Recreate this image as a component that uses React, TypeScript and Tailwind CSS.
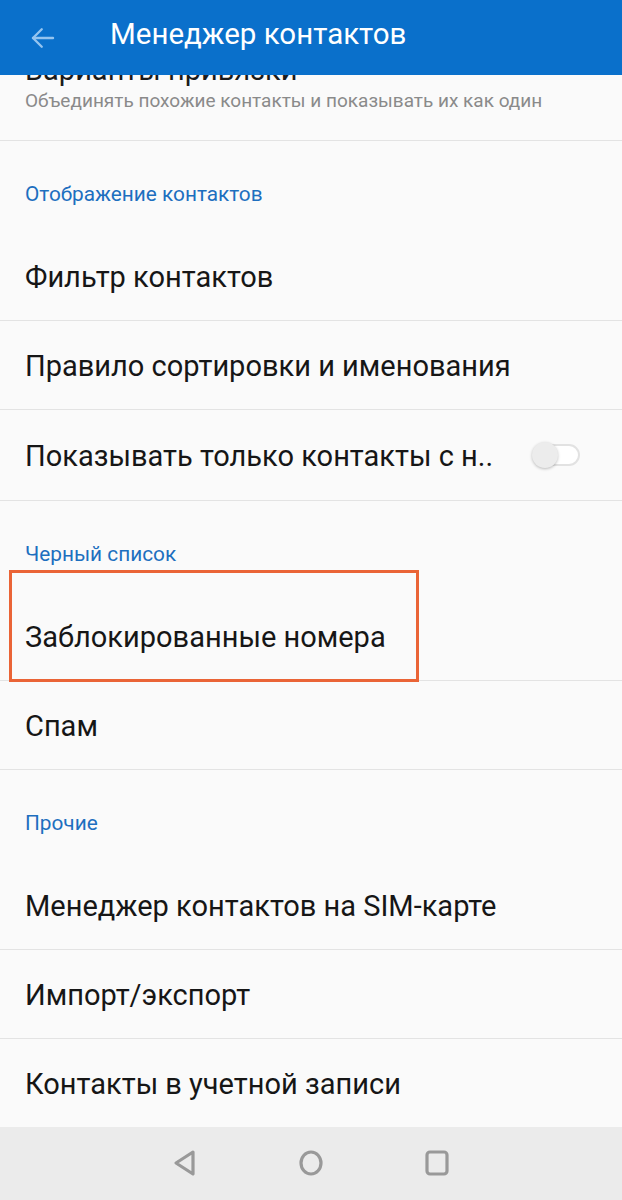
import React from "react"

const font = { fontFamily: "Roboto, 'Noto Sans', sans-serif" }

type Row = { kind: "section"; title: string } | { kind: "item"; title: string; toggle?: boolean; marked?: boolean; last?: boolean; tall?: boolean }

const rows: Row[] = [
  { kind: "section", title: "Отображение контактов" },
  { kind: "item", title: "Фильтр контактов" },
  { kind: "item", title: "Правило сортировки и именования" },
  { kind: "item", title: "Показывать только контакты с н..", toggle: true, tall: true },
  { kind: "section", title: "Черный список" },
  { kind: "item", title: "Заблокированные номера", marked: true },
  { kind: "item", title: "Спам" },
  { kind: "section", title: "Прочие" },
  { kind: "item", title: "Менеджер контактов на SIM-карте" },
  { kind: "item", title: "Импорт/экспорт" },
  { kind: "item", title: "Контакты в учетной записи", last: true },
]

const Toggle = () => (
  <div className="relative w-[48px] h-[28px] flex items-center">
    <div className="absolute left-[10px] right-0 h-[22px] rounded-full border-2 border-[#e2e2e2] bg-white" />
    <div className="absolute left-0 w-[26px] h-[26px] rounded-full bg-[#ececec] shadow-[0_1px_3px_rgba(0,0,0,0.25)]" />
  </div>
)

export default function App() {
  return (
    <div className="w-[622px] h-[1200px] bg-[#fafafa] flex flex-col overflow-hidden" style={font}>
      {/* шапка */}
      <div className="h-[75px] shrink-0 bg-[#0a70cb] flex items-center z-10">
        <div className="w-[110px] pl-[28px] flex items-center">
          <svg width="30" height="30" viewBox="0 0 24 24" fill="none" stroke="#95c4ef" strokeWidth="1.9" strokeLinecap="round" strokeLinejoin="round">
            <path d="M20 12H4" />
            <path d="M11 19l-7-7 7-7" />
          </svg>
        </div>
        <span className="text-white text-[29.5px] leading-none mt-[-6px]">Менеджер контактов</span>
      </div>

      <div className="flex-1 flex flex-col">
        {/* частично прокрученный пункт */}
        <div className="h-[66px] border-b border-[#e3e3e3] overflow-hidden px-[25px] shrink-0">
          <div className="mt-[-22px] text-[29px] leading-[34px] text-[#1b1b1b]">Варианты привязки</div>
          <div className="text-[19px] leading-[26px] text-[#8a8a8a] mt-[1px]">Объединять похожие контакты и показывать их как один</div>
        </div>

        {rows.map((r, i) =>
          r.kind === "section" ? (
            <div key={i} className="h-[91px] shrink-0 px-[25px] pt-[41px]">
              <span className="text-[20.8px] leading-[24px] text-[#1d6fbf]">{r.title}</span>
            </div>
          ) : (
            <div
              key={i}
              className={
                "relative shrink-0 flex items-center justify-between pl-[25px] pr-[42px] " +
                (r.last ? "h-[88px]" : r.tall ? "h-[91px] border-b border-[#e3e3e3]" : "h-[89px] border-b border-[#e3e3e3]")
              }
            >
              <span className="text-[29px] leading-none text-[#161616] pt-[2px]">{r.title}</span>
              {r.toggle && <Toggle />}
              {r.marked && (
                <div className="absolute left-[9px] top-[-22px] w-[410px] h-[112px] border-[3px] border-[#ea6436]" />
              )}
            </div>
          )
        )}
      </div>

      {/* навигация */}
      <div className="h-[73px] shrink-0 bg-[#ebebeb] flex items-center justify-center gap-[100px] pb-[2px]">
        <svg width="26" height="28" viewBox="0 0 26 28" fill="none" stroke="#999" strokeWidth="3.2" strokeLinejoin="round">
          <path d="M21 3 L4 14 L21 25 Z" />
        </svg>
        <svg width="26" height="28" viewBox="0 0 26 28" fill="none" stroke="#999" strokeWidth="3.2">
          <ellipse cx="13" cy="14" rx="10" ry="11" />
        </svg>
        <svg width="26" height="28" viewBox="0 0 26 28" fill="none" stroke="#999" strokeWidth="3.2">
          <rect x="3" y="3" width="20" height="22" rx="3" />
        </svg>
      </div>
    </div>
  )
}
